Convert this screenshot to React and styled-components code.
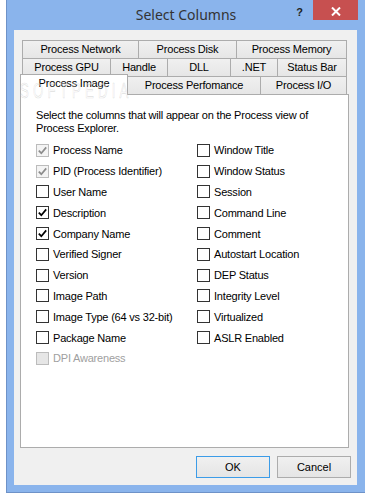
import React from 'react';
import styled, { createGlobalStyle } from 'styled-components';

const Global = createGlobalStyle`
  html, body { margin: 0; padding: 0; background: #ffffff; }
  body { width: 365px; height: 493px; overflow: hidden; }
`;

const Window = styled.div`
  position: relative;
  margin-left: 6px;
  width: 359px;
  height: 493px;
  box-sizing: border-box;
  background: #8ab4ec;
  border-left: 1px solid #6e92c8;
  border-bottom: 1px solid #6e92c8;
  display: flex;
  flex-direction: column;
  font-family: "Liberation Sans", Arial, sans-serif;
`;

const TitleBar = styled.div`
  height: 30px;
  flex: none;
  display: grid;
  grid-template-columns: 1fr auto 1fr;
  align-items: start;
`;

const Title = styled.div`
  grid-column: 2;
  font-family: "Noto Sans", "Open Sans", sans-serif;
  font-size: 14px;
  line-height: 30px;
  color: #333333;
`;

const Controls = styled.div`
  grid-column: 3;
  justify-self: end;
  display: flex;
  align-items: flex-start;
  margin-right: 7px;
`;

const Help = styled.span`
  margin-top: 6px;
  margin-right: 10px;
  font-size: 11px;
  font-weight: bold;
  line-height: 12px;
  color: #222222;
`;

const Close = styled.div`
  width: 45px;
  height: 20px;
  background: #c75050;
  display: flex;
  align-items: center;
  justify-content: center;
  padding-top: 2px;
  box-sizing: border-box;
`;

const Body = styled.div`
  flex: 1;
  margin: 0 8px 7px 7px;
  background: #f0f0f0;
  padding: 10px 6px 7px 6px;
  display: flex;
  flex-direction: column;
`;

const TabControl = styled.div`
  margin-right: 2px;
  display: flex;
  flex-direction: column;
`;

const TabRow = styled.div`
  display: flex;
  align-items: flex-start;
  padding-left: ${p => (p.$front ? 0 : 2)}px;
`;

const Tab = styled.div`
  box-sizing: border-box;
  width: ${p => p.$w}px;
  height: ${p => (p.$selected ? 21 : 18)}px;
  margin-top: ${p => (p.$selected ? -2 : 0)}px;
  margin-bottom: ${p => (p.$selected ? -1 : 0)}px;
  position: ${p => (p.$selected ? 'relative' : 'static')};
  z-index: ${p => (p.$selected ? 1 : 'auto')};
  & + & { margin-left: -1px; }
  border: 1px solid #acacac;
  border-bottom: none;
  background: ${p => (p.$selected ? '#ffffff' : 'linear-gradient(#f0f0f0, #e6e6e6)')};
  font-size: 11px;
  letter-spacing: -0.2px;
  line-height: 17px;
  text-align: center;
  color: #000000;
  white-space: nowrap;
`;

const Panel = styled.div`
  box-sizing: border-box;
  height: 354px;
  background: #ffffff;
  border: 1px solid #acacac;
  padding: 14px 15px 0 15px;
`;

const Intro = styled.p`
  margin: 0;
  font-size: 11px;
  line-height: 13px;
  letter-spacing: -0.2px;
  color: #000000;
`;

const Columns = styled.div`
  margin-top: 5px;
  display: grid;
  grid-template-columns: 161px 1fr;
`;

const Column = styled.div`
  display: flex;
  flex-direction: column;
`;

const Option = styled.div`
  height: 20.8px;
  display: flex;
  align-items: center;
  font-size: 11px;
  letter-spacing: -0.2px;
  white-space: nowrap;
  color: ${p => (p.$disabled ? '#a0a0a0' : '#000000')};
`;

const Box = styled.span`
  box-sizing: border-box;
  width: 13px;
  height: 13px;
  flex: none;
  margin-right: 4px;
  border: 1px solid ${p => (p.$state === 'normal' ? '#333333' : '#bcbcbc')};
  background: ${p => (p.$state === 'disabled' ? '#e6e6e6' : p.$state === 'grayed' ? '#f4f4f4' : '#ffffff')};
  display: flex;
  align-items: center;
  justify-content: center;
`;

const Buttons = styled.div`
  margin-top: 8px;
  display: flex;
  justify-content: flex-end;
  gap: 7px;
`;

const Button = styled.button`
  box-sizing: border-box;
  width: 74px;
  height: 22px;
  padding: 0;
  border: 1px solid ${p => (p.$default ? '#3c9ce8' : '#acacac')};
  background: linear-gradient(#f0f0f0, #e5e5e5);
  font-family: "Liberation Sans", Arial, sans-serif;
  font-size: 11px;
  line-height: 20px;
  color: #000000;
`;

const Watermark = styled.div`
  position: absolute;
  left: 13px;
  top: 80px;
  font-size: 22px;
  line-height: 22px;
  letter-spacing: 7px;
  transform: scaleX(0.6);
  transform-origin: left top;
  color: rgba(255, 255, 255, 0.35);
  -webkit-text-stroke: 0.7px rgba(150, 150, 150, 0.3);
  pointer-events: none;
  z-index: 2;
`;

const rows = [
  [
    { t: 'Process Network', w: 117 },
    { t: 'Process Disk', w: 99 },
    { t: 'Process Memory', w: 111 },
  ],
  [
    { t: 'Process GPU', w: 89 },
    { t: 'Handle', w: 58 },
    { t: 'DLL', w: 64 },
    { t: '.NET', w: 48 },
    { t: 'Status Bar', w: 70 },
  ],
];

const frontRow = [
  { t: 'Process Image', w: 108, sel: true },
  { t: 'Process Perfomance', w: 134 },
  { t: 'Process I/O', w: 87 },
];

const left = [
  { t: 'Process Name', c: true, s: 'grayed' },
  { t: 'PID (Process Identifier)', c: true, s: 'grayed' },
  { t: 'User Name' },
  { t: 'Description', c: true },
  { t: 'Company Name', c: true },
  { t: 'Verified Signer' },
  { t: 'Version' },
  { t: 'Image Path' },
  { t: 'Image Type (64 vs 32-bit)' },
  { t: 'Package Name' },
  { t: 'DPI Awareness', s: 'disabled' },
];

const right = [
  { t: 'Window Title' },
  { t: 'Window Status' },
  { t: 'Session' },
  { t: 'Command Line' },
  { t: 'Comment' },
  { t: 'Autostart Location' },
  { t: 'DEP Status' },
  { t: 'Integrity Level' },
  { t: 'Virtualized' },
  { t: 'ASLR Enabled' },
];

function Check({ color }) {
  return (
    <svg width="11" height="11" viewBox="0 0 11 11">
      <polyline points="1.8,5.6 4.3,8.2 9.2,2.4" fill="none" stroke={color} strokeWidth="1.7" />
    </svg>
  );
}

function CheckOption({ item }) {
  const state = item.s || 'normal';
  return (
    <Option $disabled={state === 'disabled'}>
      <Box $state={state}>{item.c && <Check color={state === 'grayed' ? '#8c8c8c' : '#000'} />}</Box>
      {item.t}
    </Option>
  );
}

export default function App() {
  return (
    <>
      <Global />
      <Window>
        <TitleBar>
          <Title>Select Columns</Title>
          <Controls>
            <Help>?</Help>
            <Close>
              <svg width="10" height="9" viewBox="0 0 10 9">
                <path d="M1 0.5 L9 8.5 M9 0.5 L1 8.5" stroke="#fff" strokeWidth="2" />
              </svg>
            </Close>
          </Controls>
        </TitleBar>
        <Body>
          <TabControl>
            {rows.map((r, i) => (
              <TabRow key={i}>
                {r.map(tab => (
                  <Tab key={tab.t} $w={tab.w}>{tab.t}</Tab>
                ))}
              </TabRow>
            ))}
            <TabRow $front>
              {frontRow.map(tab => (
                <Tab key={tab.t} $w={tab.w} $selected={tab.sel}>{tab.t}</Tab>
              ))}
            </TabRow>
            <Panel>
              <Intro>
                Select the columns that will appear on the Process view of
                <br />
                Process Explorer.
              </Intro>
              <Columns>
                <Column>
                  {left.map(it => <CheckOption key={it.t} item={it} />)}
                </Column>
                <Column>
                  {right.map(it => <CheckOption key={it.t} item={it} />)}
                </Column>
              </Columns>
            </Panel>
          </TabControl>
          <Buttons>
            <Button $default>OK</Button>
            <Button>Cancel</Button>
          </Buttons>
        </Body>
        <Watermark>SOFTPEDIA</Watermark>
      </Window>
    </>
  );
}
